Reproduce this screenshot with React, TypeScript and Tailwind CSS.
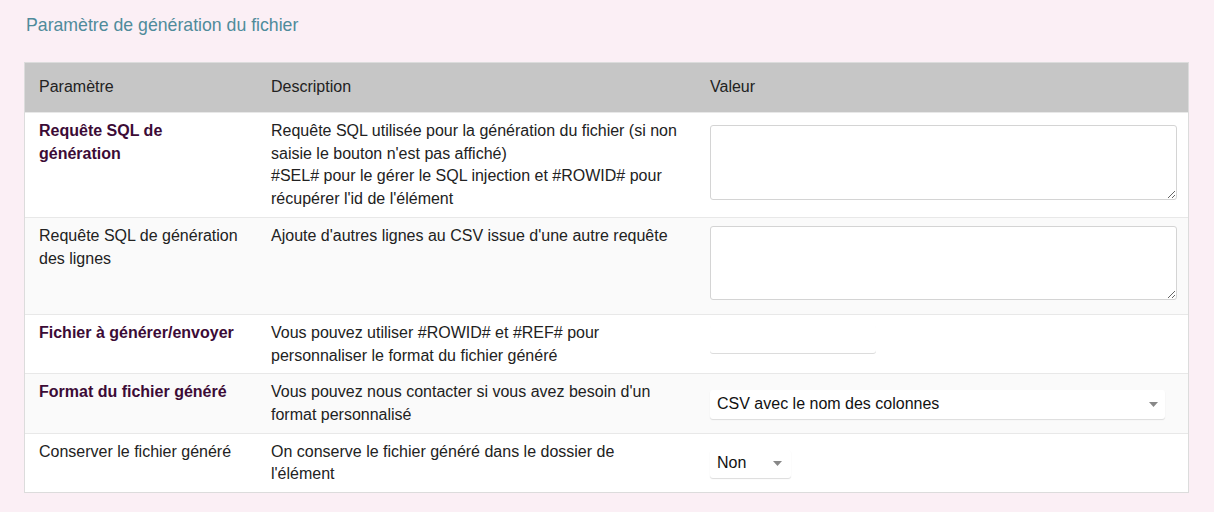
import { useState } from 'react';

type Row = {
  label: string;
  bold: boolean;
  desc: string[];
  kind: 'textarea' | 'input' | 'select' | 'selectSmall';
  value?: string;
};

const ROWS: Row[] = [
  {
    label: 'Requête SQL de génération',
    bold: true,
    desc: [
      "Requête SQL utilisée pour la génération du fichier (si non saisie le bouton n'est pas affiché)",
      "#SEL# pour le gérer le SQL injection et #ROWID# pour récupérer l'id de l'élément",
    ],
    kind: 'textarea',
  },
  {
    label: 'Requête SQL de génération des lignes',
    bold: false,
    desc: ["Ajoute d'autres lignes au CSV issue d'une autre requête"],
    kind: 'textarea',
  },
  {
    label: 'Fichier à générer/envoyer',
    bold: true,
    desc: ['Vous pouvez utiliser #ROWID# et #REF# pour personnaliser le format du fichier généré'],
    kind: 'input',
  },
  {
    label: 'Format du fichier généré',
    bold: true,
    desc: ["Vous pouvez nous contacter si vous avez besoin d'un format personnalisé"],
    kind: 'select',
    value: 'CSV avec le nom des colonnes',
  },
  {
    label: 'Conserver le fichier généré',
    bold: false,
    desc: ["On conserve le fichier généré dans le dossier de l'élément"],
    kind: 'selectSmall',
    value: 'Non',
  },
];

function Caret() {
  return (
    <svg width="9" height="5" viewBox="0 0 9 5" className="shrink-0">
      <path d="M0 0h9L4.5 5z" fill="#888" />
    </svg>
  );
}

function ValueCell({ row, index }: { row: Row; index: number }) {
  const [text, setText] = useState('');
  if (row.kind === 'textarea') {
    return (
      <textarea
        value={text}
        onChange={(e) => setText(e.target.value)}
        className={
          index === 0
            ? 'block w-[467px] h-[75px] mt-[4px] mb-[6px] rounded-[3px] border border-[#d4d4d4] bg-white outline-none'
            : 'block w-[467px] h-[74px] mt-[0px] mb-[6px] rounded-[3px] border border-[#d4d4d4] bg-white outline-none'
        }
      />
    );
  }
  if (row.kind === 'input') {
    return (
      <input
        value={text}
        onChange={(e) => setText(e.target.value)}
        className="block w-[166px] h-[28px] mt-[2px] rounded-[3px] bg-white shadow-[0_1px_0_#dcdcdc] outline-none"
      />
    );
  }
  const wide = row.kind === 'select';
  return (
    <div
      className={
        wide
          ? 'flex items-center justify-between w-[455px] h-[29px] mt-[8px] pl-[7px] pr-[7px] rounded-[3px] bg-white shadow-[0_1px_1px_#dcdcdc]'
          : 'flex items-center justify-between w-[81px] h-[28px] mt-[8px] pl-[7px] pr-[9px] rounded-[3px] bg-white shadow-[0_1px_1px_#dcdcdc]'
      }
    >
      <span className="text-[16px] text-[#111]">{row.value}</span>
      <Caret />
    </div>
  );
}

export default function App() {
  return (
    <div
      className="min-h-[512px] bg-[#fbeff5] pl-[24px] pr-[25px] pt-[14px]"
      style={{ fontFamily: '"Liberation Sans", Arial, sans-serif' }}
    >
      <h2 className="pl-[2px] text-[17.7px] leading-[22px] text-[#4f8b9b]">Paramètre de génération du fichier</h2>

      <div className="mt-[26px] border border-[#dcdcdc] bg-white text-[16px] leading-[22.7px] text-[#222]">
        <div className="grid grid-cols-[232px_439px_1fr] h-[49px] items-center bg-[#c6c6c6] text-[#222]">
          <div className="pl-[14px]">Paramètre</div>
          <div className="pl-[14px]">Description</div>
          <div className="pl-[14px]">Valeur</div>
        </div>

        {ROWS.map((row, i) => (
          <div
            key={row.label}
            className={
              i % 2 === 1
                ? 'grid grid-cols-[232px_439px_1fr] border-t border-[#e8e8e8] bg-[#fafafa]'
                : 'grid grid-cols-[232px_439px_1fr] border-t border-[#e8e8e8] bg-white'
            }
          >
            <div
              className={
                row.bold
                  ? 'pl-[14px] pr-[10px] pt-[7px] pb-[6px] font-bold text-[#3c0b36]'
                  : 'pl-[14px] pr-[10px] pt-[7px] pb-[6px]'
              }
            >
              {row.label}
            </div>
            <div className="pl-[14px] pr-[15px] pt-[7px] pb-[6px]">
              {row.desc.map((d) => (
                <div key={d}>{d}</div>
              ))}
            </div>
            <div className="pl-[14px] pr-[11px] pt-[8px] pb-[8px]">
              <ValueCell row={row} index={i} />
            </div>
          </div>
        ))}
      </div>
    </div>
  );
}
